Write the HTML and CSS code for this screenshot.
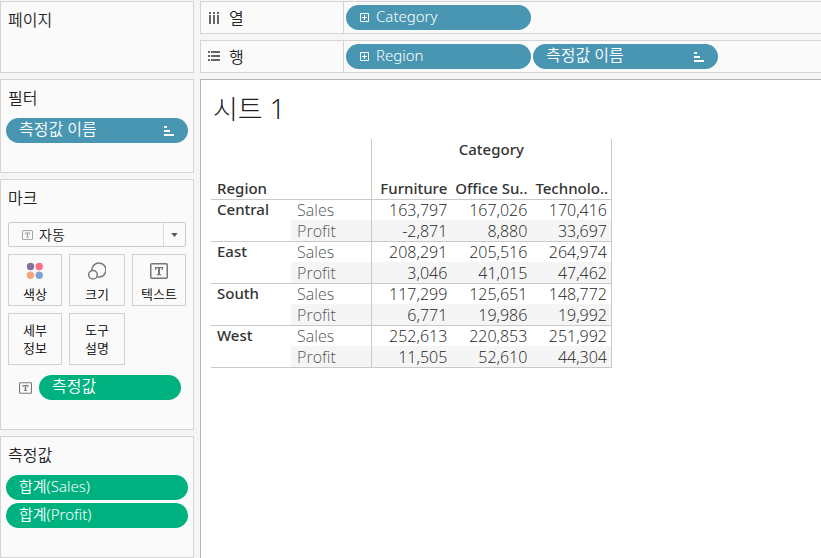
FILE: index.html
```html
<!DOCTYPE html>
<html lang="ko">
<head>
<meta charset="utf-8">
<title>시트 1</title>
<link rel="stylesheet" href="styles.css">
</head>
<body>
<svg class="defs" aria-hidden="true">
  <symbol id="sort" viewBox="0 0 10 10"><path d="M0 0h3v2H0zM0 4h6v2H0zM0 8h10v2H0z" fill="#fff"/></symbol>
  <symbol id="plus" viewBox="0 0 9 9"><path d="M.5.5h8v8h-8zM2 4.5h5M4.5 2v5" fill="none" stroke="#fff"/></symbol>
  <symbol id="text" viewBox="0 0 18 16"><rect x=".75" y=".75" width="16.5" height="14.5" rx="1" fill="none" stroke="currentColor" stroke-width="1.5"/><path d="M5 4h8v3h-1l-.5-1.7H10V11l1.300.5v.7H6.700v-.7L8 11V5.300H6.500L6 7H5z" fill="currentColor"/></symbol>
</svg>
<div class="app">
  <aside class="side">
    <section class="card pages"><h2>페이지</h2></section>
    <section class="card filters">
      <h2>필터</h2>
      <button class="pill blue"><span>측정값 이름</span><svg class="sort"><use href="#sort"/></svg></button>
    </section>
    <section class="card marks">
      <h2>마크</h2>
      <div class="mark-type">
        <svg class="type-icon"><use href="#text"/></svg>
        <select aria-label="마크 유형"><option>자동</option></select>
        <span class="arrow"><svg width="7" height="4" viewBox="0 0 8 5"><path d="M0 0h8L4 5z" fill="#555"/></svg></span>
      </div>
      <div class="mark-grid">
        <button class="mark">
          <svg width="18" height="18" viewBox="0 0 18 18"><circle cx="4.500" cy="4.500" r="3.700" fill="#86709b"/><circle cx="13.200" cy="4.500" r="3.700" fill="#fb6f80"/><circle cx="4.500" cy="13.200" r="3.700" fill="#f4a67a"/><circle cx="13.200" cy="13.200" r="3.700" fill="#7fa3cf"/></svg>
          색상</button>
        <button class="mark">
          <svg width="18" height="18" viewBox="0 0 18 18" fill="none" stroke="#777" stroke-width="1.500"><path d="M3.900 8.200A7 7 0 1 1 9.300 14.800"/><circle cx="5" cy="12.700" r="4.300"/></svg>
          크기</button>
        <button class="mark"><svg class="text-icon"><use href="#text"/></svg>텍스트</button>
        <button class="mark">세부<br>정보</button>
        <button class="mark">도구<br>설명</button>
      </div>
      <div class="mark-pill">
        <svg class="small-text"><use href="#text"/></svg>
        <button class="pill green"><span>측정값</span></button>
      </div>
    </section>
    <section class="card values">
      <h2>측정값</h2>
      <button class="pill green latin"><span>합계(Sales)</span></button>
      <button class="pill green latin"><span>합계(Profit)</span></button>
    </section>
  </aside>
  <main class="main">
    <section class="shelf">
      <h2><svg width="14" height="14" viewBox="0 0 14 14"><path d="M1 1h2v2H1zM5 1h2v2H5zM9 1h2v2H9zM1 4h2v9H1zM5 4h2v9H5zM9 4h2v9H9z" fill="#666"/></svg>열</h2>
      <button class="pill blue latin"><svg class="plus"><use href="#plus"/></svg><span>Category</span></button>
    </section>
    <section class="shelf">
      <h2><svg width="14" height="14" viewBox="0 0 14 14"><path d="M0 1h2v2H0zM0 5h2v2H0zM0 9h2v2H0zM3 1h9v2H3zM3 5h9v2H3zM3 9h9v2H3z" fill="#666"/></svg>행</h2>
      <button class="pill blue latin"><svg class="plus"><use href="#plus"/></svg><span>Region</span></button>
      <button class="pill blue"><span>측정값 이름</span><svg class="sort"><use href="#sort"/></svg></button>
    </section>
    <section class="sheet">
      <h1>시트 1</h1>
      <table>
        <colgroup><col><col><col><col><col></colgroup>
        <thead>
          <tr class="field"><td colspan="2"></td><th colspan="3" class="edge last">Category</th></tr>
          <tr class="names"><th colspan="2" class="region">Region</th><th class="edge">Furniture</th><th>Office Su..</th><th class="last">Technolo..</th></tr>
        </thead>
        <tbody>
          <tr><th rowspan="2">Central</th><td class="measure">Sales</td><td class="edge">163,797</td><td>167,026</td><td class="last">170,416</td></tr>
          <tr class="band"><td class="measure">Profit</td><td class="edge">-2,871</td><td>8,880</td><td class="last">33,697</td></tr>
        </tbody>
        <tbody>
          <tr><th rowspan="2">East</th><td class="measure">Sales</td><td class="edge">208,291</td><td>205,516</td><td class="last">264,974</td></tr>
          <tr class="band"><td class="measure">Profit</td><td class="edge">3,046</td><td>41,015</td><td class="last">47,462</td></tr>
        </tbody>
        <tbody>
          <tr><th rowspan="2">South</th><td class="measure">Sales</td><td class="edge">117,299</td><td>125,651</td><td class="last">148,772</td></tr>
          <tr class="band"><td class="measure">Profit</td><td class="edge">6,771</td><td>19,986</td><td class="last">19,992</td></tr>
        </tbody>
        <tbody>
          <tr><th rowspan="2">West</th><td class="measure">Sales</td><td class="edge">252,613</td><td>220,853</td><td class="last">251,992</td></tr>
          <tr class="band"><td class="measure">Profit</td><td class="edge">11,505</td><td>52,610</td><td class="last">44,304</td></tr>
        </tbody>
      </table>
    </section>
  </main>
</div>
</body>
</html>
```
FILE: styles.css
```css
* { box-sizing: border-box; }
body { margin: 0; background: #f5f5f5; color: #222; font-family: "Noto Sans", "Noto Sans CJK KR", sans-serif; }
h1, h2 { margin: 0; font-weight: 350; }
h1 { font-weight: 300; }
svg { flex: none; display: block; }
button, select { font-family: inherit; }
.defs { position: absolute; width: 0; height: 0; }

.app { display: flex; gap: 6px; min-height: 100vh; padding-top: 1px; }
.side { width: 194px; flex: none; display: flex; flex-direction: column; gap: 6px; }
.card { background: #fafafa; border: 1px solid #d4d4d4; padding: 6px 5px; }
.card h2 { font-size: 16px; line-height: 24px; padding-left: 2px; }
.pages { min-height: 72px; }
.filters { min-height: 94px; }
.marks { min-height: 251px; }
.values { flex: 1; min-height: 122px; }

.pill { display: flex; align-items: center; justify-content: space-between; width: 100%; height: 25px; border: 0; border-radius: 13px; padding: 0 14px 0 13px; color: #fff; font-size: 16px; line-height: 21px; font-weight: 350; text-align: left; }
.pill span { padding-bottom: 3px; }
.blue { background: #4996b2; }
.green { background: #00b180; }
.latin { font-size: 15px; }
.latin span { padding-bottom: 2px; }
.sort { width: 10px; height: 10px; }
.plus { width: 9px; height: 9px; }
.filters .pill, .values h2 + .pill { margin-top: 8px; }
.values .pill + .pill { margin-top: 3px; }

.mark-type { display: flex; align-items: center; height: 25px; margin: 12px 2px 7px; border: 1px solid #ccc; border-radius: 2px; }
.type-icon { width: 11px; height: 10px; margin-left: 13px; color: #999; }
.mark-type select { flex: 1; min-width: 0; appearance: none; border: 0; background: none; padding: 0 6px; color: #222; font-size: 14px; line-height: 22px; font-weight: 350; }
.arrow { display: flex; align-items: center; justify-content: center; align-self: stretch; width: 22px; border-left: 1px solid #ddd; pointer-events: none; }
.mark-grid { display: grid; grid-template-columns: 54fr 56fr 54fr; grid-auto-rows: 52px; gap: 7px; margin: 0 2px; }
.mark { display: flex; flex-direction: column; align-items: center; justify-content: center; padding: 0; border: 1px solid #d0d0d0; background: #fafafa; color: #000; font-size: 13px; line-height: 18px; font-weight: 350; }
.mark svg { margin: 4px 0 5px; }
.mark .text-icon { width: 18px; height: 16px; margin: 5px 0 6px; color: #777; }
.mark-pill { display: flex; align-items: center; gap: 7px; padding: 10px 7px 0 13px; }
.small-text { width: 13px; height: 12px; color: #777; }

.main { flex: 1; min-width: 0; display: flex; flex-direction: column; gap: 6px; }
.shelf { display: flex; align-items: center; gap: 2px; height: 33px; border: 1px solid #d4d4d4; border-right: 0; background: #fafafa; }
.shelf h2 { display: flex; align-items: center; align-self: stretch; gap: 7px; width: 143px; padding-left: 7px; border-right: 1px solid #d4d4d4; font-size: 16px; line-height: 24px; }
.shelf .pill { width: 185px; }
.shelf .plus { margin-left: 1px; }
.shelf .plus + span { flex: 1; padding-left: 7px; }

.sheet { flex: 1; background: #fff; border: solid #b4b4b4; border-width: 1px 0 0 1px; padding: 10px; }
.sheet h1 { padding-left: 2px; font-size: 27px; line-height: 38px; }
table { width: 401px; margin-top: 11px; table-layout: fixed; border-collapse: collapse; font-family: "Open Sans", sans-serif; font-size: 16px; line-height: 18px; }
th, td { padding: 0 4px; font-weight: 300; text-align: right; white-space: nowrap; height: 21px; }
th { color: #333; font-family: "Noto Sans", sans-serif; font-size: 15px; line-height: 19px; font-weight: 500; }
.field th { height: 39px; padding-top: 1px; text-align: center; vertical-align: top; }
.names th { vertical-align: middle; }
thead .region, tbody th { text-align: left; padding-left: 6px; }
tbody th { vertical-align: top; }
tbody td { padding-top: 1px; }
td.measure { color: #555; text-align: left; padding-left: 6px; }
tbody { border-top: 1px solid #c9c9c9; }
tbody:last-child { border-bottom: 1px solid #c9c9c9; }
.edge { border-left: 1px solid #c9c9c9; }
.last { border-right: 1px solid #c9c9c9; }
.band td { background: #f5f5f5; padding-top: 2px; }
```
